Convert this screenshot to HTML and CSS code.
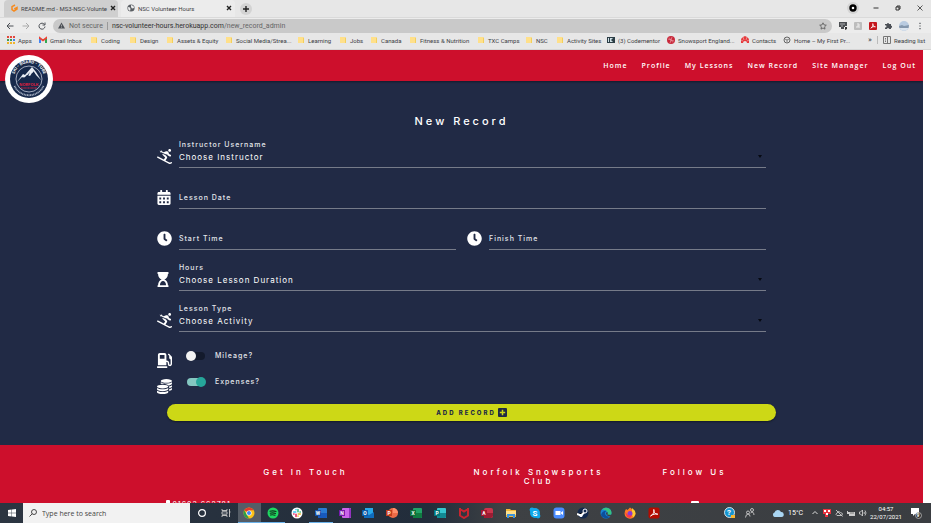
FILE: index.html
```html
<!DOCTYPE html>
<html lang="en">
<head>
<meta charset="utf-8">
<meta name="viewport" content="width=device-width, initial-scale=1">
<title>NSC Volunteer Hours</title>
<link rel="stylesheet" href="styles.css">
</head>
<body>
<svg class="sprite" aria-hidden="true">
  <symbol id="skiing" viewBox="0 0 512 512"><path d="M432 96c26.500 0 48-21.500 48-48S458.500 0 432 0s-48 21.500-48 48 21.500 48 48 48zm73 356.100c-9.400-9.400-24.600-9.400-33.900 0-12.100 12.100-30.500 15.400-45.100 8.700l-135.800-70.200 49.200-73.800c12.700-19 10.200-44.500-6-60.600L293 215.700l-107-53.100c-2.900 19.900 3.400 40 17.700 54.400l75.100 75.200-45.900 68.800L35 258.700c-11.700-6-26.200-1.500-32.300 10.300-6.100 11.800-1.500 26.300 10.300 32.300l391.900 202.500c11.900 5.500 24.500 8.100 37.100 8.100 23.200 0 46-9 63-26 9.300-9.300 9.300-24.500 0-33.800zM120 91.600l-11.500 22.500c14.400 7.300 31.200 4.900 42.800-4.800l47.200 23.400c-.1.1-.1.2-.2.3l114.500 56.800 32.400-13 6.400 19.100c4 12.100 12.600 22 24 27.700l58.100 29c15.900 7.900 35 1.500 42.900-14.300 7.900-15.800 1.500-35-14.300-42.900l-52.100-26.100-17.100-51.200c-8.100-24.200-40.900-56.600-84.500-39.200l-81.200 32.500-62.500-31c.3-14.500-7.200-28.600-20.900-35.600l-11.100 21.700h-.2l-34.400-7c-1.800-.4-3.700.2-5 1.700-1.900 2.200-1.700 5.500.5 7.400l26.200 23z"/></symbol>
  <symbol id="calendar" viewBox="0 0 448 512"><path fill-rule="evenodd" d="M0 464c0 26 22 48 48 48h352c26 0 48-22 48-48V192H0zM64 256h64v64H64zm128 0h64v64h-64zm128 0h64v64h-64zM64 384h64v64H64zm128 0h64v64h-64zm128 0h64v64h-64zM400 64h-48V16c0-9-7-16-16-16h-32c-9 0-16 7-16 16v48H160V16c0-9-7-16-16-16h-32c-9 0-16 7-16 16v48H48C22 64 0 86 0 112v48h448v-48c0-26-22-48-48-48z"/></symbol>
  <symbol id="clock" viewBox="0 0 512 512"><path d="M256,8C119,8,8,119,8,256S119,504,256,504,504,393,504,256,393,8,256,8Zm92.490,313h0l-20,25a16,16,0,0,1-22.490,2.500h0l-67-49.720a40,40,0,0,1-15-31.230V112a16,16,0,0,1,16-16h32a16,16,0,0,1,16,16V256l58,42.500A16,16,0,0,1,348.490,321Z"/></symbol>
  <symbol id="hourglass" viewBox="0 0 384 512"><path fill-rule="evenodd" d="M360 0H24C11 0 0 11 0 24v16c0 13 11 24 24 24 0 91 51 168 121 192C75 280 24 357 24 448c-13 0-24 11-24 24v16c0 13 11 24 24 24h336c13 0 24-11 24-24v-16c0-13-11-24-24-24 0-91-51-168-121-192C309 232 360 155 360 64c13 0 24-11 24-24V24c0-13-11-24-24-24zM296 448H88c0-77 46-144 104-144s104 67 104 144z"/></symbol>
  <symbol id="pump" viewBox="0 0 512 512"><path fill-rule="evenodd" d="M336 448H16c-8.800 0-16 7.200-16 16v32c0 8.800 7.200 16 16 16h320c8.800 0 16-7.200 16-16v-32c0-8.800-7.200-16-16-16zm157.200-340.700l-81-81c-6.200-6.200-16.400-6.200-22.600 0l-11.300 11.300c-6.200 6.200-6.200 16.400 0 22.600L416 97.900V160c0 28.100 20.900 51.300 48 55.200V376c0 13.200-10.800 24-24 24s-24-10.800-24-24v-32c0-48.600-39.400-88-88-88h-8V64c0-35.300-28.700-64-64-64H96C60.700 0 32 28.700 32 64v352h288V304h8c22.100 0 40 17.900 40 40v27.800c0 37.700 27 72 64.500 75.900 43 4.300 79.500-29.500 79.500-71.700V152.600c0-17-6.800-33.300-18.800-45.300zM256 192H96V64h160v128z"/></symbol>
  <symbol id="coins" viewBox="0 0 512 512"><ellipse cx="320" cy="68" rx="192" ry="64"/><path d="M128 112c50 34 120 42 192 42s150-10 192-42v45c0 30-50 56-120 66-40-42-120-61-200-61-22 0-42 1-62 5zM416 250c40-7 75-20 96-38v44c0 24-38 46-96 57zM416 345c40-7 75-20 96-38v44c0 24-38 46-96 57z"/><ellipse cx="192" cy="256" rx="192" ry="64"/><path d="M0 305c42 32 118 44 192 44s150-12 192-44v47c0 36-86 64-192 64S0 388 0 352zM0 403c42 32 118 44 192 44s150-12 192-44v45c0 36-86 64-192 64S0 484 0 448z"/></symbol>
  <symbol id="folder" viewBox="0 0 8 8"><path fill="#f3cf5c" d="M1 1h5l1 1v5H1z"/><path fill="#ffe08a" d="M1 1h5v6H1z"/></symbol>
</svg>

<header class="browser">
  <div class="tabs">
    <div class="tab">
      <svg class="ico" viewBox="0 0 8 8" aria-hidden="true"><path fill="none" stroke="#f58a1f" stroke-width="1.500" d="M5 1L2 2.600v3L4 7l3-2V3.600L4.300 5"/></svg>
      <span class="tab-name">README.md - MS3-NSC-Volunte</span>
      <button class="close" type="button" aria-label="Close README tab"><svg viewBox="0 0 6 6"><path stroke="#222" stroke-width="1.400" d="M1 1l4 4M5 1L1 5"/></svg></button>
    </div>
    <div class="tab active">
      <svg class="ico" viewBox="0 0 8 8" aria-hidden="true"><circle cx="4" cy="4" r="3.600" fill="#5a5e63"/><path fill="#eee" d="M1 3l2 .5.500 1.500L3 7 1.300 5.500zM4 1l2.500 1L7 4 5 4.500 4 3z"/></svg>
      <span class="tab-name">NSC Volunteer Hours</span>
      <button class="close" type="button" aria-label="Close NSC tab"><svg viewBox="0 0 6 6"><path stroke="#222" stroke-width="1.400" d="M1 1l4 4M5 1L1 5"/></svg></button>
    </div>
    <button class="new-tab" type="button" aria-label="New tab"><svg viewBox="0 0 12 12"><path stroke="#222" stroke-width="1.400" d="M6 3v6M3 6h6"/></svg></button>
    <div class="window">
      <svg class="record" viewBox="0 0 12 12" aria-hidden="true"><circle cx="6" cy="6" r="6" fill="#d4d4d4"/><circle cx="6" cy="6" r="2.500" fill="#fff" stroke="#000" stroke-width="2.400"/></svg>
      <svg class="ico" viewBox="0 0 8 8" aria-hidden="true"><path stroke="#333" d="M1.500 4h5"/></svg>
      <svg class="ico" viewBox="0 0 8 8" aria-hidden="true"><path fill="none" stroke="#333" d="M2 3h3v3H2zM3 3V2h3v3H5"/></svg>
      <svg class="ico" viewBox="0 0 8 8" aria-hidden="true"><path stroke="#333" stroke-width=".8" d="M1.500 1.500l5 5m0-5l-5 5"/></svg>
    </div>
  </div>
  <div class="toolbar">
    <div class="history">
      <svg class="ico" viewBox="0 0 8 8" aria-hidden="true"><path fill="none" stroke="#4c5056" d="M7.500 4H1m3-3L1 4l3 3"/></svg>
      <svg class="ico" viewBox="0 0 8 8" aria-hidden="true"><path fill="none" stroke="#aaa" d="M.5 4H7M4 1l3 3-3 3"/></svg>
      <svg class="ico" viewBox="0 0 8 8" aria-hidden="true"><path fill="none" stroke="#4c5056" d="M6.500 2.500A3 3 0 1 0 7 4.500M7 .5V3H4.500"/></svg>
    </div>
    <div class="address">
      <svg class="warn" viewBox="0 0 7 7" aria-hidden="true"><path fill="#4c5056" d="M3.500.5L7 6.500H0z"/><path stroke="#ccc" stroke-width=".7" d="M3.500 2.600v1.700m0 .5v.8"/></svg>
      <span class="insecure">Not secure</span>
      <span class="url">nsc-volunteer-hours.herokuapp.com<span class="path">/new_record_admin</span></span>
      <svg class="ico" viewBox="0 0 8 8" aria-hidden="true"><path fill="none" stroke="#555" stroke-width=".8" d="M4 .8l1 2.100 2.300.3-1.700 1.600.4 2.300-2-1.100-2 1.100.4-2.300L.7 3.200 3 2.900z"/></svg>
    </div>
    <div class="extensions">
      <svg class="ico" viewBox="0 0 8 8" aria-hidden="true"><path fill="#4b4e52" d="M0 0h8v4H6v1H5v2H2V5H0z"/><path stroke="#ddd" stroke-width=".7" d="M1 2h5M2 4h2"/><path fill="#333" d="M6 5h2v2L6 8z"/></svg>
      <svg class="ico" viewBox="0 0 8 8" aria-hidden="true"><rect width="8" height="8" rx="1" fill="#bdbdbd"/><path stroke="#eee" fill="none" d="M3 2h2v2H3v2m2-2v2"/></svg>
      <svg class="ico" viewBox="0 0 8 8" aria-hidden="true"><rect width="8" height="8" rx="1" fill="#c4161c"/><path fill="none" stroke="#fff" stroke-width=".8" d="M1.800 6.200C3.500 5 4.500 3 3.800 1.600c-.5 1.800 1 3.200 2.600 3.200C5 4.300 3 4.800 1.800 6.200"/></svg>
      <svg class="ico" viewBox="0 0 8 8" aria-hidden="true"><path fill="#4c5056" d="M1 2h2a1 1 0 1 1 2 0h2v2a1 1 0 1 1 0 1.500V7H5a1 1 0 1 0-2 0H1V5.300a1 1 0 1 0 0-1.800z"/></svg>
      <svg class="avatar" viewBox="0 0 10 10" aria-hidden="true"><circle cx="5" cy="5" r="5" fill="#b9cbe0"/><path fill="#8497ad" d="M0 5l3-1 2 1 5-1-.5 3-9 0z"/><path fill="#dce5ef" d="M.6 7h8.800A5 5 0 0 1 .6 7"/></svg>
      <svg class="ico" viewBox="0 0 8 8" aria-hidden="true"><path stroke="#4c5056" stroke-width="1.200" d="M4 .8V2m0 1.400v1.200M4 6v1.200"/></svg>
    </div>
  </div>
  <nav class="bookmarks" aria-label="Bookmarks">
    <a href="#"><svg class="ico" viewBox="0 0 8 8" aria-hidden="true"><path stroke="#e2483d" stroke-width="2" stroke-dasharray="2 1" d="M0 1h8"/><path stroke="#3c9b57" stroke-width="2" stroke-dasharray="2 1" d="M0 4h5"/><path stroke="#4484ec" stroke-width="2" d="M6 4h2"/><path stroke="#f0b52c" stroke-width="2" stroke-dasharray="2 1" d="M0 7h8"/></svg>Apps</a>
    <a href="#"><svg class="ico" viewBox="0 0 8 8" aria-hidden="true"><path fill="#4285f4" d="M0 2h2v5H0z"/><path fill="#34a853" d="M6 2h2v5H6z"/><path fill="none" stroke="#ea4335" stroke-width="1.700" d="M.8 3V2L4 4.500 7.200 2v1"/></svg>Gmail Inbox</a>
    <a href="#"><svg class="ico" aria-hidden="true"><use href="#folder"/></svg>Coding</a>
    <a href="#"><svg class="ico" aria-hidden="true"><use href="#folder"/></svg>Design</a>
    <a href="#"><svg class="ico" aria-hidden="true"><use href="#folder"/></svg>Assets &amp; Equity</a>
    <a href="#"><svg class="ico" aria-hidden="true"><use href="#folder"/></svg>Social Media/Strea...</a>
    <a href="#"><svg class="ico" aria-hidden="true"><use href="#folder"/></svg>Learning</a>
    <a href="#"><svg class="ico" aria-hidden="true"><use href="#folder"/></svg>Jobs</a>
    <a href="#"><svg class="ico" aria-hidden="true"><use href="#folder"/></svg>Canada</a>
    <a href="#"><svg class="ico" aria-hidden="true"><use href="#folder"/></svg>Fitness &amp; Nutrition</a>
    <a href="#"><svg class="ico" aria-hidden="true"><use href="#folder"/></svg>TXC Camps</a>
    <a href="#"><svg class="ico" aria-hidden="true"><use href="#folder"/></svg>NSC</a>
    <a href="#"><svg class="ico" aria-hidden="true"><use href="#folder"/></svg>Activity Sites</a>
    <a href="#"><svg class="ico" viewBox="0 0 8 8" aria-hidden="true"><path fill="#2c3e46" d="M0 1h8v6H0z"/><path fill="#cfe0e6" d="M1 2h1v4H1zm2 0h3L4 4l2 2H3zm4 0v3"/></svg>(3) Codementor</a>
    <a href="#"><svg class="ico" viewBox="0 0 8 8" aria-hidden="true"><circle cx="4" cy="4" r="4" fill="#c8283a"/><path fill="none" stroke="#eea8b0" stroke-width=".6" d="M1 3l6 2M3 7l2-6M2 1.500l4 5"/></svg>Snowsport England...</a>
    <a href="#"><svg class="ico" viewBox="0 0 8 8" aria-hidden="true"><path fill="#e63a3d" d="M0 3l2-2 2-1 2 1 2 2v4H6a2 2 0 0 0-4 0H0z"/><path stroke="#f2c0c0" stroke-width=".6" d="M2 1l1 3m3-3L5 4M0 4l2 1m6-1L6 5"/></svg>Contacts</a>
    <a href="#"><svg class="ico" viewBox="0 0 8 8" aria-hidden="true"><circle cx="4" cy="4" r="3" fill="none" stroke="#666"/><path fill="none" stroke="#666" stroke-width=".8" d="M2 3l2 1 2-1M4 4v2"/></svg>Home – My First Pr...</a>
    <span class="more">»</span>
    <a class="reading" href="#"><svg class="ico" viewBox="0 0 8 8" aria-hidden="true"><path fill="none" stroke="#777" d="M.5 .5h7v7h-7zM4.500 1v6M2 2.500h1m-1 1.500h1m-1 1.500h1"/></svg>Reading list</a>
  </nav>
</header>

<div class="page">
  <header class="site-header">
    <a class="logo" href="#" aria-label="Norfolk Snowsports Club">
      <svg viewBox="0 0 48 48">
        <defs><path id="arc-top" d="M9.500 27a15 15 0 1 1 29 0"/></defs>
        <circle cx="24" cy="24" r="24" fill="#fff"/><circle cx="24" cy="24" r="19" fill="#182a4c"/>
        <circle cx="24" cy="24" r="13" fill="#15284a" stroke="#c5ccda" stroke-width=".8"/>
        <path fill="none" stroke="#aeb8c9" stroke-width="1.800" stroke-dasharray="1 .6" d="M9.500 31a16 16 0 0 0 29 0"/>
        <path fill="#e8edf4" d="M12 27l6-8 2 1 7-8 4 5 5 8-5-5-2-3-2 1-2 3-3-1-3 3-2-1z"/>
        <path fill="#15284a" d="M17 24l2-2 1 1 5-6-3 6-3 1zM28 16l2 3 2 4-4-4z"/>
        <text class="logo-arc"><textPath href="#arc-top" startOffset="50%">SKI - BOARD - TUBE</textPath></text>
        <text class="logo-name" x="24" y="31">NORFOLK</text>
        <path stroke="#dd1e3e" stroke-width="1.200" stroke-dasharray="1 .4" d="M16 33h16"/>
      </svg>
    </a>
    <nav class="site-nav" aria-label="Site">
      <a href="#">Home</a><a href="#">Profile</a><a href="#">My Lessons</a><a href="#">New Record</a><a href="#">Site Manager</a><a href="#">Log Out</a>
    </nav>
  </header>

  <main>
    <h1>New Record</h1>
    <form>
      <div class="field">
        <svg class="glyph" aria-hidden="true"><use href="#skiing"/></svg>
        <div class="control">
          <label for="instructor">Instructor Username</label>
          <select id="instructor"><option>Choose Instructor</option></select>
        </div>
      </div>
      <div class="field">
        <svg class="glyph narrow" aria-hidden="true"><use href="#calendar"/></svg>
        <div class="control text"><label for="date">Lesson Date</label><input id="date" type="text"></div>
      </div>
      <div class="pair">
        <div class="field">
          <svg class="glyph" aria-hidden="true"><use href="#clock"/></svg>
          <div class="control text"><label for="start">Start Time</label><input id="start" type="text"></div>
        </div>
        <div class="field">
          <svg class="glyph" aria-hidden="true"><use href="#clock"/></svg>
          <div class="control text"><label for="finish">Finish Time</label><input id="finish" type="text"></div>
        </div>
      </div>
      <div class="field">
        <svg class="glyph slim" aria-hidden="true"><use href="#hourglass"/></svg>
        <div class="control">
          <label for="hours">Hours</label>
          <select id="hours"><option>Choose Lesson Duration</option></select>
        </div>
      </div>
      <div class="field">
        <svg class="glyph" aria-hidden="true"><use href="#skiing"/></svg>
        <div class="control">
          <label for="activity">Lesson Type</label>
          <select id="activity"><option>Choose Activity</option></select>
        </div>
      </div>
      <div class="switches">
        <div class="switch"><svg class="glyph" aria-hidden="true"><use href="#pump"/></svg><input id="mileage" type="checkbox"><label for="mileage">Mileage?</label></div>
        <div class="switch"><svg class="glyph" aria-hidden="true"><use href="#coins"/></svg><input id="expenses" type="checkbox" checked><label for="expenses">Expenses?</label></div>
      </div>
      <button class="submit" type="button">ADD RECORD
        <svg viewBox="0 0 9 9" aria-hidden="true"><rect width="9" height="9" rx="1" fill="#212a45"/><path stroke="#cdd816" stroke-width="1.500" d="M4.500 1.800v5.400M1.800 4.500h5.400"/></svg>
      </button>
    </form>
  </main>

  <footer class="site-footer">
    <section><h2>Get In Touch</h2><p class="phone"><svg viewBox="0 0 4 7" aria-hidden="true"><rect width="4" height="7" rx="1" fill="#fff"/></svg>01603 662781</p></section>
    <section class="club"><h2>Norfolk Snowsports Club</h2></section>
    <section><h2>Follow Us</h2><svg class="social" viewBox="0 0 8 8" aria-hidden="true"><rect width="8" height="8" rx="1" fill="#fff"/></svg></section>
  </footer>
</div>

<footer class="taskbar">
  <button class="start" type="button" aria-label="Start"><svg class="ico" viewBox="0 0 8 8"><path fill="#fff" d="M0 1l3.600-.5v3.300H0zM4 .5L8 0v3.800H4zM0 4.200h3.600v3.300L0 7zM4 4.200h4V8l-4-.5z"/></svg></button>
  <label class="search"><svg class="ico" viewBox="0 0 8 8" aria-hidden="true"><circle cx="5" cy="3" r="2.500" fill="none" stroke="#222" stroke-width=".8"/><path stroke="#222" stroke-width=".8" d="M3.200 4.800L.5 7.500"/></svg><input type="text" placeholder="Type here to search" aria-label="Type here to search"></label>
  <div class="apps">
    <span><svg viewBox="0 0 12 12"><circle cx="6" cy="6" r="3.400" fill="none" stroke="#fff" stroke-width="1.200"/></svg></span>
    <span><svg viewBox="0 0 12 12"><path fill="none" stroke="#ccc" stroke-width=".9" d="M2 2v1.500h5V2M2 10V8.500h5V10M2 4.800h5v2.400H2zM9.500 2v8M9 5h1.500"/></svg></span>
    <span class="current open"><svg viewBox="0 0 12 12"><circle cx="6" cy="6" r="5.500" fill="#fbc116"/><path fill="#e33b2e" d="M6 6L1.200 3.300A5.500 5.500 0 0 1 10.800 3.300H6z"/><path fill="#2c9f4b" d="M1.200 3.300L4 8l2 3.500A5.500 5.500 0 0 1 1.200 3.300"/><circle cx="6" cy="6" r="2.600" fill="#fff"/><circle cx="6" cy="6" r="2" fill="#4285f4"/></svg></span>
    <span class="open"><svg viewBox="0 0 12 12"><circle cx="6" cy="6" r="5.500" fill="#1ed760"/><path fill="none" stroke="#12351e" stroke-width="1.100" stroke-linecap="round" d="M3 4.300q3-1 6 .3M3.200 6.200q2.800-.8 5.300.4M3.500 8q2.400-.6 4.500.3"/></svg></span>
    <span><svg viewBox="0 0 12 12"><circle cx="6" cy="6" r="5.500" fill="#fff"/><g stroke-width="1.500" stroke-linecap="round"><path stroke="#36c5f0" d="M2.600 5h2.200M5 2.500v.3"/><path stroke="#2eb67d" d="M7 2.600v2.200M9 5h.3"/><path stroke="#ecb22e" d="M7.200 7h2.200M7 9v.3"/><path stroke="#e01e5a" d="M5 7.200v2.200M3 7h-.3"/></g></svg></span>
    <span class="open"><svg viewBox="0 0 12 12"><rect x="3" y="1" width="9" height="10" rx="1" fill="#2b7cd3"/><path fill="#185abd" d="M3 6h9v4l-1 1H3z"/><rect y="3" width="6" height="6" fill="#174fa8"/><text class="app-letter" x="3" y="8">W</text></svg></span>
    <span><svg viewBox="0 0 12 12"><rect x="3" y="1" width="9" height="10" rx="1" fill="#ca64ea"/><path fill="#9332bf" d="M10 1h1l1 1v8l-1 1h-1z"/><rect y="3" width="6" height="6" fill="#7719aa"/><text class="app-letter" x="3" y="8">N</text></svg></span>
    <span><svg viewBox="0 0 12 12"><rect x="3" y="1" width="8" height="7" fill="#28a8ea"/><path fill="#0f6cbd" d="M2 5l5 3 5-3v6H2z"/><rect y="3" width="6" height="6" fill="#0b5cab"/><text class="app-letter" x="3" y="8">O</text></svg></span>
    <span><svg viewBox="0 0 12 12"><circle cx="7" cy="6" r="5" fill="#ed6c47"/><path fill="#ff8f6b" d="M7 1a5 5 0 0 1 5 5H7z"/><rect y="3" width="6" height="6" fill="#c43e1c"/><text class="app-letter" x="3" y="8">P</text></svg></span>
    <span><svg viewBox="0 0 12 12"><rect x="3" y="1" width="9" height="10" rx="1" fill="#21a366"/><path fill="#107c41" d="M3 6h9v4l-1 1H3z"/><rect y="3" width="6" height="6" fill="#0f703b"/><text class="app-letter" x="3" y="8">X</text></svg></span>
    <span><svg viewBox="0 0 12 12"><rect x="3" y="1" width="9" height="10" rx="1" fill="#37c6d0"/><path fill="#128a94" d="M3 6h9v4l-1 1H3z"/><rect y="3" width="6" height="6" fill="#03787c"/><text class="app-letter" x="3" y="8">P</text></svg></span>
    <span><svg viewBox="0 0 12 12"><path fill="none" stroke="#c8242f" stroke-width="2" d="M2 1v7.500L6 11l4-2.500V1M2 2l4 2.500L10 2"/></svg></span>
    <span><svg viewBox="0 0 12 12"><rect x="3" y="1" width="9" height="10" rx="2" fill="#c9344b"/><path fill="#9c1c33" d="M3 6h9v3l-2 2H3z"/><rect y="3" width="6" height="6" fill="#a4182f"/><text class="app-letter" x="3" y="8">A</text></svg></span>
    <span><svg viewBox="0 0 12 12"><path fill="#f2b83b" d="M1 2h4l1 1h5v7H1z"/><path fill="#ffe08a" d="M1 4h10v4H1z"/><path fill="#3c93df" d="M2 7h8v4H8V9H4v2H2z"/></svg></span>
    <span><svg viewBox="0 0 12 12"><circle cx="6" cy="6" r="5" fill="#0fa8ea"/><circle cx="3" cy="3" r="2.400" fill="#0fa8ea"/><circle cx="9" cy="9" r="2.400" fill="#0fa8ea"/><text class="app-letter skype" x="6" y="9">S</text></svg></span>
    <span><svg viewBox="0 0 12 12"><rect x=".5" y=".5" width="11" height="11" rx="3" fill="#4a8cff"/><path fill="#fff" d="M2.500 4h5v4h-5zM8 5.500L10 4v4L8 6.500z"/></svg></span>
    <span><svg viewBox="0 0 12 12"><circle cx="6" cy="6" r="5.500" fill="#13294e"/><path stroke="#fff" stroke-width="2" d="M0 7l4 1.500L7.500 5"/><circle cx="8" cy="4" r="2" fill="#13294e" stroke="#fff"/><circle cx="4" cy="8.500" r="1.600" fill="#fff"/></svg></span>
    <span><svg viewBox="0 0 12 12"><circle cx="6" cy="6" r="5.500" fill="#1783d4"/><path fill="#35c481" d="M2 2.500A5.500 5.500 0 0 1 11.500 6c0 2-2 2.500-4 2C9 6 7 3 2 2.500"/><path fill="#0c4f9b" d="M1 8c1-4 4-4.500 5.500-4C4 5 4 9 9.500 10A5.500 5.500 0 0 1 1 8"/><path fill="#3c4043" d="M6 5.500h2L7.300 7.500 12 8v1.500C9 10 5.500 8 6 5.500"/></svg></span>
    <span><svg viewBox="0 0 12 12"><path fill="#ff7b22" d="M1 4l1-2 1.500 1L6 .5 8 2l2 1 1.500 3a5.500 5.500 0 1 1-11 .5z"/><path fill="#ffcb2e" d="M8 1l3 3 .5 3-2 3.500L8 8z"/><circle cx="6" cy="6.500" r="2.500" fill="#8a3bd0"/><path fill="#f5334f" d="M1 5l3 3 4 .5-2 2.500-3-1z"/></svg></span>
    <span><svg viewBox="0 0 12 12"><rect x=".5" y=".5" width="11" height="11" rx="2" fill="#b30b00"/><path fill="none" stroke="#fff" d="M2.500 9C5 7.500 7 4.500 5.800 2.500 5 5 7.500 7.300 9.800 7.200 7.500 6.500 4.500 7.300 2.500 9"/></svg></span>
  </div>
  <div class="tray">
    <svg class="tray-app" viewBox="0 0 12 12"><circle cx="5.500" cy="5.500" r="5" fill="#1695d0" stroke="#fff" stroke-width=".8"/><text class="app-letter help" x="5" y="8">?</text><path fill="#f8b62d" d="M7 8h4v3H7z"/></svg>
    <svg class="tray-app" viewBox="0 0 12 12"><g fill="none" stroke="#ccc" stroke-width=".9"><circle cx="4" cy="5.500" r="1.500"/><circle cx="8" cy="3" r="1.500"/><path d="M1.500 10.500q.5-3.500 2.500-3.500t2 2.500M6.500 6q3-2.500 3.500 2"/></g></svg>
    <div class="weather"><svg viewBox="0 0 12 8"><path fill="#a9d5f2" d="M2.500 8a2.400 2.400 0 0 1 0-4.500A3.500 3.500 0 0 1 9 3a2.500 2.500 0 0 1 .5 5z"/></svg>15°C</div>
    <div class="status">
      <svg class="ico" viewBox="0 0 8 8"><path fill="none" stroke="#ddd" d="M1.500 5L4 2.500 6.500 5"/></svg>
      <svg class="ico" viewBox="0 0 8 8"><path fill="#e8333f" d="M0 0h8v5H5v3H2V5H0z"/><path fill="#fff" d="M1 1h2v2H1zm4 0h2v2H5zM3 4h2v2H3z"/></svg>
      <svg class="ico" viewBox="0 0 8 8"><path fill="none" stroke="#ccc" stroke-width=".9" d="M2 6.500q-2-1 0-2.500 1-3 3.500-.5 3 .5 1.500 3zM1 1l6.500 6.500"/></svg>
      <svg class="ico" viewBox="0 0 8 8"><path fill="#ccc" d="M1 3h7v4H2V5H0V2h1z"/><path stroke="#444" stroke-width=".6" d="M3 4h4"/></svg>
      <svg class="ico" viewBox="0 0 8 8"><path fill="none" stroke="#ddd" stroke-width=".8" d="M.5 3h1L3.500 1v6l-2-2h-1zM5 3q.8 1 0 2M6 1.500q2 2.500 0 5"/></svg>
    </div>
    <div class="datetime"><time>04:57</time><time>22/07/2021</time></div>
    <svg class="notify" viewBox="0 0 12 12"><path fill="#fff" d="M1 1h8v6H5L3 9V7H1z"/><circle cx="8.500" cy="8.500" r="3" fill="#333" stroke="#ccc" stroke-width=".7"/><text class="app-letter badge" x="8" y="10">9</text></svg>
  </div>
</footer>
</body>
</html>
```
FILE: styles.css
```css
* { box-sizing: border-box; }
body {
  margin: 0;
  height: 100vh;
  display: flex;
  flex-direction: column;
  overflow: hidden;
  background: #fff;
  font-family: Roboto, "Noto Sans", sans-serif;
  font-size: 6px;
  color: #3c4045;
}
a { color: inherit; text-decoration: none; }
button, input, select { font: inherit; color: inherit; border: 0; padding: 0; margin: 0; background: none; letter-spacing: inherit; }
h1, h2, p { margin: 0; }
.sprite { display: none; }
.ico { width: 8px; height: 8px; flex: none; }

/* Browser chrome */
.browser { flex: none; background: #e7e7e7; }
.tabs { display: flex; height: 17px; padding-left: 4px; gap: 3px; align-items: stretch; }
.tab { display: flex; align-items: center; gap: 3px; width: 114px; padding: 0 3px 1px 6px; background: #cfcfcf; border-radius: 4px 4px 0 0; }
.tab.active { background: #ececec; }
.tab-name { flex: 1; white-space: nowrap; }
.close svg { display: block; width: 6px; height: 6px; }
.new-tab { align-self: center; width: 12px; height: 12px; margin-left: 2px; border-radius: 6px; background: #d3d3d3; }
.new-tab svg { display: block; width: 12px; height: 12px; }
.window { display: flex; align-items: center; gap: 14px; margin-left: auto; padding: 0 7px 2px 0; }
.record { width: 12px; height: 12px; margin-right: -1px; }
.toolbar { display: flex; align-items: center; height: 16px; padding: 0 7px 0 6px; background: #ececec; border-top: 1px solid #dadada; }
.history { display: flex; gap: 8px; width: 47px; flex: none; }
.address { flex: 1; display: flex; align-items: center; height: 14px; padding: 0 5px; border-radius: 7px; background: #c9c9c9; font-size: 7px; }
.warn { width: 7px; height: 7px; margin-right: 4px; }
.insecure { padding-right: 4px; margin-right: 4px; border-right: 1px solid #999; line-height: 8px; color: #666; }
.url { flex: 1; color: #333; }
.path { color: #666; }
.extensions { display: flex; align-items: center; gap: 7px; padding-left: 7px; }
.avatar { width: 10px; height: 10px; }
.bookmarks {
  display: grid;
  grid-template-columns: 32px 51px 39px 37px 59px 72px 42px 31px 39px 68px 48px 31px 51px 60px 74px 42px 1fr 9px 54px;
  align-items: center;
  height: 17px;
  padding: 0 0 2px 7px;
  white-space: nowrap;
  border-bottom: 1px solid #d5d5d5;
}
.bookmarks a { display: flex; align-items: center; gap: 3px; }
.more { font-size: 8px; line-height: 8px; }
.bookmarks .reading { padding-left: 5px; border-left: 1px solid #bbb; }

/* Site */
.page { flex: 1; min-height: 0; display: flex; flex-direction: column; margin-right: 8px; overflow: hidden; background: #212a45; color: #fff; font-family: Inter, "Open Sans", sans-serif; letter-spacing: 1px; }
.site-header { position: relative; z-index: 1; display: flex; flex: none; justify-content: space-between; height: 31px; padding: 0 7px 0 5px; background: #cd0f2c; box-shadow: 0 1px 2px rgba(0, 0, 0, .4); }
.logo { width: 48px; height: 48px; margin-top: 5px; }
.logo svg { display: block; width: 48px; height: 48px; letter-spacing: 0; text-anchor: middle; font-weight: 700; }
.logo-arc { font-size: 4px; fill: #fff; }
.logo-name { font-size: 4px; fill: #dd1e3e; }
.site-nav { display: flex; align-items: center; gap: 14px; font-family: "Open Sans", sans-serif; font-size: 7px; font-weight: 600; }
main { flex: none; padding: 33px 17% 24px; }
h1 { font-size: 11px; line-height: 14px; font-weight: 500; letter-spacing: 3px; text-align: center; }
form { margin-top: -1px; }
.field { display: flex; align-items: flex-end; height: 41px; }
.pair { display: grid; grid-template-columns: 1fr 1fr; gap: 11px; }
.glyph { width: 15px; height: 15px; flex: none; fill: #fff; }
.glyph.narrow { width: 14px; }
.glyph.slim { width: 12px; }
.field .glyph { margin-bottom: 4px; }
.control { position: relative; flex: 1; margin-left: 7px; display: flex; flex-direction: column; border-bottom: 1px solid #767b89; }
.field .glyph.narrow + .control { margin-left: 8px; }
.field .glyph.slim + .control { margin-left: 10px; }
label { font-size: 7px; line-height: 9px; font-weight: 500; color: #e4e6eb; }
select { appearance: none; height: 18px; padding-bottom: 2px; font-size: 8px; font-weight: 400; }
.control:not(.text)::after { content: ""; position: absolute; right: 4px; bottom: 9px; border: 2px solid transparent; border-top: 3px solid #060912; border-bottom: 0; }
.control.text { display: grid; }
.control.text label, .control.text input { grid-area: 1 / 1; }
.control.text label { margin-top: 2px; }
.control.text input { height: 17px; font-size: 8px; outline: 0; }
.switches { display: grid; gap: 11px; margin-top: 21px; }
.switch { display: flex; height: 15px; }
.switch label { margin-left: 10px; margin-top: -2px; }
.switch input { appearance: none; position: relative; width: 18px; height: 8px; margin: -1px 0 0 15px; border-radius: 4px; background: #131a2c; }
.switch input::before { content: ""; position: absolute; top: -1px; left: -1px; width: 10px; height: 10px; border-radius: 5px; background: #f2f2f2; }
.switch input:checked { background: #84c7c1; }
.switch input:checked::before { left: 9px; background: #26a69a; }
.submit { display: flex; align-items: center; justify-content: center; gap: 2px; width: 100%; height: 17px; margin: 10px 0 0 10px; border-radius: 9px; background: #cdd816; color: #212a45; font-size: 6px; font-weight: 800; letter-spacing: 2px; box-shadow: 0 1px 2px rgba(0, 0, 0, .4); }
.submit svg { width: 9px; height: 9px; }
.site-footer { flex: 1 0 auto; display: grid; grid-template-columns: 334fr 132fr 180fr; padding: 23px 15% 0; background: #cd0f2c; }
.site-footer section { text-align: center; }
.site-footer .club { margin: 0 -8px; }
h2 { font-size: 8px; line-height: 9px; font-weight: 500; letter-spacing: 3px; }
.phone { display: flex; gap: 2px; margin: 23px 0 0 28px; font-size: 7px; line-height: 9px; }
.phone svg { width: 4px; height: 7px; }
.social { width: 8px; height: 8px; margin-top: 24px; }

/* Taskbar */
.taskbar { position: relative; flex: none; display: flex; height: 20px; background: linear-gradient(90deg, #2c3541, #222d3b 46%, #3e4144 54%, #3a3d41); color: #fff; }
.start { display: grid; place-items: center; width: 23px; }
.search { display: flex; align-items: center; gap: 5px; flex: 0 1 167px; padding-left: 6px; background: #f2f2f2; font-family: "Open Sans", sans-serif; }
.search input { flex: 1; min-width: 0; color: #444; }
.search input::placeholder { color: #444; opacity: 1; }
.apps { display: flex; flex: 0 1 476px; }
.apps span { flex: 1; display: grid; place-items: center; border-bottom: 1px solid transparent; }
.apps svg { width: 12px; height: 12px; }
.apps .current { background: #555d67; }
.apps .open { border-bottom-color: #6bb2ea; }
.app-letter { font-size: 5px; font-weight: 700; fill: #fff; text-anchor: middle; }
.app-letter.skype, .app-letter.help { font-size: 8px; }
.tray { display: flex; align-items: center; margin-left: auto; padding-right: 9px; }
.tray-app { width: 12px; height: 12px; margin-right: 8px; }
.weather { display: flex; align-items: center; gap: 4px; margin: 0 8px; font-size: 7px; }
.weather svg { width: 12px; height: 8px; }
.status { display: flex; gap: 4px; }
.datetime { display: flex; flex-direction: column; align-items: center; margin: 0 8px 0 3px; line-height: 8px; }
.notify { width: 12px; height: 12px; }
```
